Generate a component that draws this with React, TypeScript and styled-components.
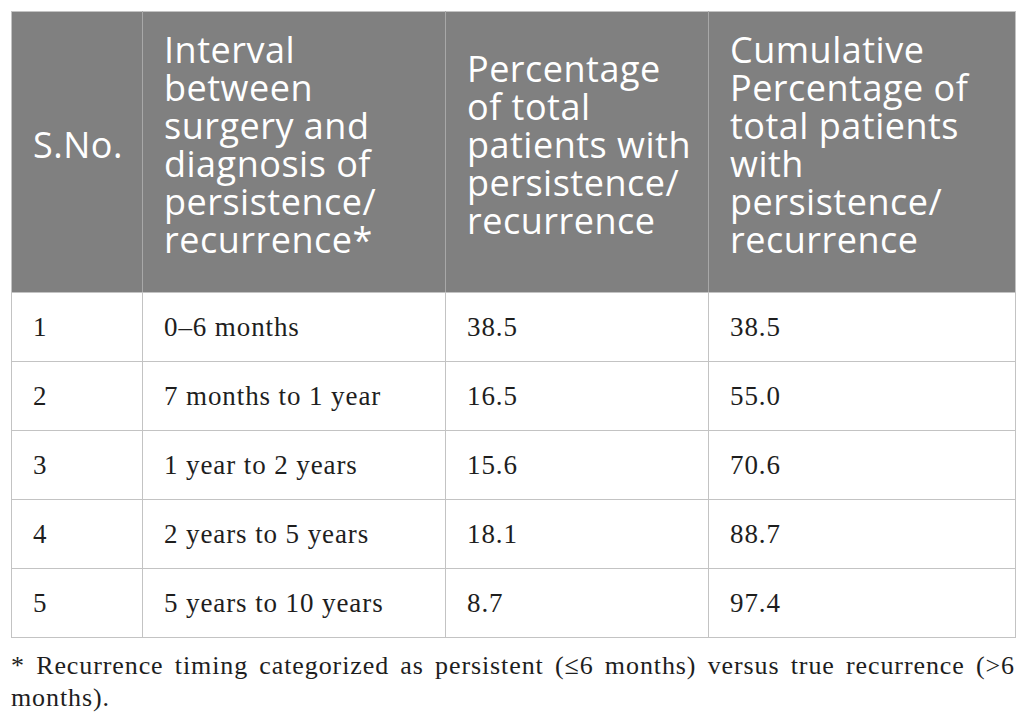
import { Fragment } from 'react';
import styled, { createGlobalStyle } from 'styled-components';

interface IntervalRow {
  sno: number;
  interval: string;
  percentage: string;
  cumulative: string;
}

const rows: IntervalRow[] = [
  { sno: 1, interval: '0–6 months', percentage: '38.5', cumulative: '38.5' },
  { sno: 2, interval: '7 months to 1 year', percentage: '16.5', cumulative: '55.0' },
  { sno: 3, interval: '1 year to 2 years', percentage: '15.6', cumulative: '70.6' },
  { sno: 4, interval: '2 years to 5 years', percentage: '18.1', cumulative: '88.7' },
  { sno: 5, interval: '5 years to 10 years', percentage: '8.7', cumulative: '97.4' },
];

// header labels, split the way the printed table wraps them
const columns: { width: number; lines: string[] }[] = [
  { width: 131, lines: ['S.No.'] },
  {
    width: 303,
    lines: ['Interval', 'between', 'surgery and', 'diagnosis of', 'persistence/', 'recurrence*'],
  },
  { width: 263, lines: ['Percentage', 'of total', 'patients with', 'persistence/', 'recurrence'] },
  {
    width: 307,
    lines: ['Cumulative', 'Percentage of', 'total patients', 'with', 'persistence/', 'recurrence'],
  },
];

const GlobalStyle = createGlobalStyle`
  html, body {
    margin: 0;
    padding: 0;
    background: #fff;
  }
`;

const Page = styled.div`
  padding: 11px;
  width: 1004px;
`;

const Table = styled.table`
  width: 1004px;
  border-collapse: collapse;
  table-layout: fixed;
  border: 1px solid #c3c3c3;
`;

const HeadCell = styled.th<{ $width: number }>`
  box-sizing: border-box;
  width: ${(p) => p.$width}px;
  background: #808080;
  color: #fff;
  font-family: 'Open Sans', 'Noto Sans', sans-serif;
  font-size: 36px;
  font-weight: 400;
  letter-spacing: 0.5px;
  line-height: 38px;
  white-space: nowrap;
  text-align: left;
  vertical-align: middle;
  padding: 19px 8px 33px 21px;
  border-left: 1px solid #a8a8a8;
  border-bottom: 1px solid #c3c3c3;

  &:first-child {
    border-left: none;
  }
`;

const Cell = styled.td`
  box-sizing: border-box;
  font-family: 'Liberation Serif', 'Times New Roman', serif;
  font-size: 27px;
  letter-spacing: 0.9px;
  line-height: 34px;
  color: #1e1e1e;
  padding: 17px 8px 17px 21px;
  border: 1px solid #c3c3c3;
  vertical-align: middle;
`;

const Footnote = styled.p`
  margin: 12px 0 0;
  font-family: 'Liberation Serif', 'Times New Roman', serif;
  font-size: 26px;
  letter-spacing: 0.9px;
  line-height: 32px;
  color: #1e1e1e;
  text-align: justify;
`;

export default function App() {
  return (
    <Page>
      <GlobalStyle />
      <Table>
        <thead>
          <tr>
            {columns.map((c, i) => (
              <HeadCell key={i} $width={c.width}>
                {c.lines.map((line, j) => (
                  <Fragment key={j}>
                    {j > 0 && <br />}
                    {line}
                  </Fragment>
                ))}
              </HeadCell>
            ))}
          </tr>
        </thead>
        <tbody>
          {rows.map((r) => (
            <tr key={r.sno}>
              <Cell>{r.sno}</Cell>
              <Cell>{r.interval}</Cell>
              <Cell>{r.percentage}</Cell>
              <Cell>{r.cumulative}</Cell>
            </tr>
          ))}
        </tbody>
      </Table>
      <Footnote>
        * Recurrence timing categorized as persistent (≤6 months) versus true recurrence (&gt;6
        months).
      </Footnote>
    </Page>
  );
}
